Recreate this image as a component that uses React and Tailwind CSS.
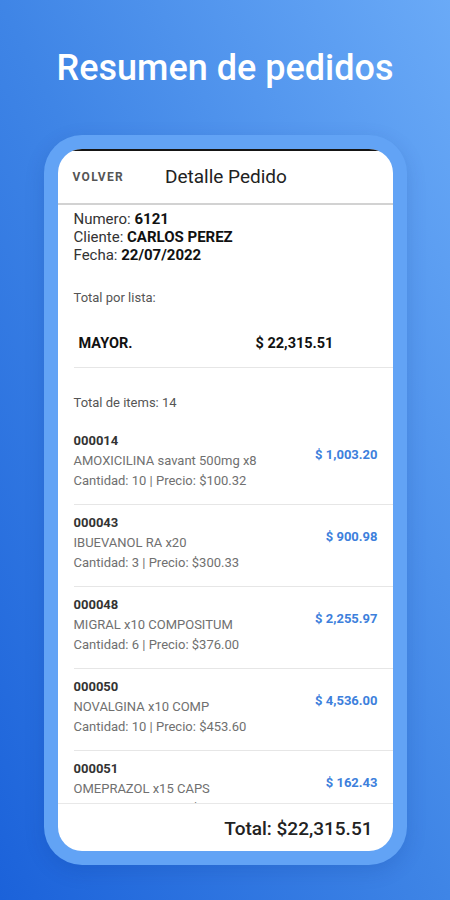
import React from "react";

const items = [
  { code: "000014", name: "AMOXICILINA savant 500mg x8", qty: 10, price: "$100.32", total: "$ 1,003.20" },
  { code: "000043", name: "IBUEVANOL RA x20", qty: 3, price: "$300.33", total: "$ 900.98" },
  { code: "000048", name: "MIGRAL x10 COMPOSITUM", qty: 6, price: "$376.00", total: "$ 2,255.97" },
  { code: "000050", name: "NOVALGINA x10 COMP", qty: 10, price: "$453.60", total: "$ 4,536.00" },
  { code: "000051", name: "OMEPRAZOL x15 CAPS", qty: 1, price: "$162.43", total: "$ 162.43" },
];

const ItemRow = ({ item }) => (
  <div className="flex items-start justify-between border-b border-[#e6e6e6] pt-[8px] pb-[13px] pr-[15px]">
    <div className="flex flex-col">
      <span className="text-[13px] leading-[20px] font-bold text-[#333]">{item.code}</span>
      <span className="text-[13px] leading-[20px] text-[#707070]">{item.name}</span>
      <span className="text-[13px] leading-[20px] text-[#707070]">
        Cantidad: {item.qty} | Precio: {item.price}
      </span>
    </div>
    <span className="pt-[14px] text-[13px] leading-[20px] font-bold text-[#3d80dc]">{item.total}</span>
  </div>
);

export default function App() {
  return (
    <div
      className="w-[450px] h-[900px] overflow-hidden flex flex-col items-center bg-gradient-to-bl from-[#6aaaf7] via-[#3f85e6] to-[#1b62da]"
      style={{ fontFamily: "Roboto, 'Noto Sans', sans-serif" }}
    >
      <h1 className="pt-[47px] text-[36px] leading-[42px] font-medium text-white">Resumen de pedidos</h1>

      <div className="mt-[46px] w-[363px] h-[730px] rounded-[38px] bg-[#62a3f5] p-[14px] shadow-[0_6px_20px_rgba(0,40,120,0.15)]">
        <div className="h-full rounded-[24px] bg-white overflow-hidden flex flex-col">
          <div className="h-[2px] bg-[#151515]" />

          {/* header */}
          <div className="h-[54px] flex items-center border-b-2 border-[#d2d2d2] pl-[15px]">
            <span className="text-[12px] font-bold tracking-[1.3px] text-[#555]">VOLVER</span>
            <span className="ml-[41px] text-[19px] text-[#222]">Detalle Pedido</span>
          </div>

          {/* content */}
          <div className="flex-1 overflow-hidden pl-4">
            <div className="pt-[5px] text-[15px] leading-[18px] text-[#333]">
              <div>
                Numero: <b className="text-[#111]">6121</b>
              </div>
              <div>
                Cliente: <b className="text-[#111]">CARLOS PEREZ</b>
              </div>
              <div>
                Fecha: <b className="text-[#111]">22/07/2022</b>
              </div>
            </div>

            <div className="mt-[26px] text-[13px] leading-[16px] text-[#555]">Total por lista:</div>

            <div className="flex pl-[5px] pt-[30px] pb-[15px] border-b border-[#e6e6e6] text-[14.5px] leading-[16px] font-bold text-[#111]">
              <span className="w-[177px]">MAYOR.</span>
              <span>$ 22,315.51</span>
            </div>

            <div className="mt-[27px] text-[13px] leading-[16px] text-[#555]">Total de items: 14</div>

            <div className="mt-[12px]">
              {items.map((item) => (
                <ItemRow key={item.code} item={item} />
              ))}
            </div>
          </div>

          {/* footer */}
          <div className="h-[48px] flex items-center justify-end border-t border-[#e8e8e8] pr-[20px] pt-[3px]">
            <span className="text-[19px] font-medium text-[#222]">Total: $22,315.51</span>
          </div>
        </div>
      </div>
    </div>
  );
}
